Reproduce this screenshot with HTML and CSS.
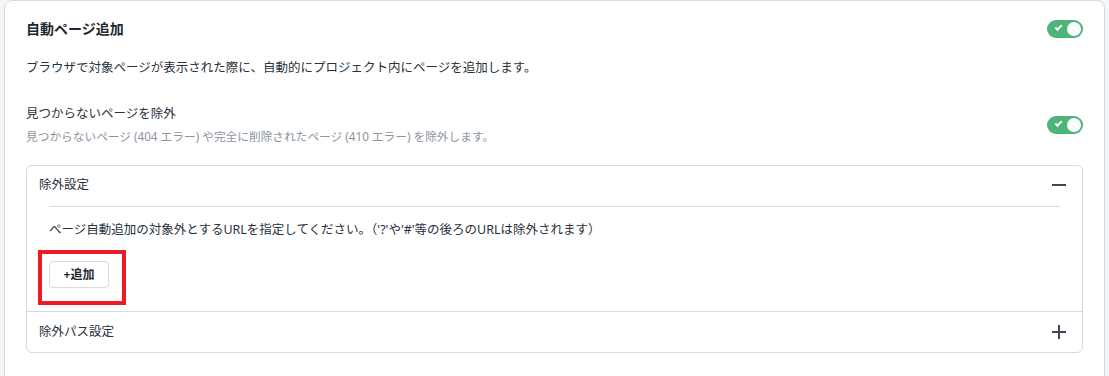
FILE: index.html
```html
<!DOCTYPE html>
<html lang="ja">

<head>
    <meta charset="UTF-8">
    <meta name="viewport" content="width=device-width, initial-scale=1.0">
    <title>自動ページ追加</title>
    <link rel="stylesheet" href="styles.css">
</head>

<body>
    <div class="settings-card">
        <div class="setting-row">
            <h2 class="setting-title">自動ページ追加</h2>
            <span class="toggle"><span class="toggle-check"></span><span class="toggle-knob"></span></span>
        </div>
        <p class="setting-desc">ブラウザで対象ページが表示された際に、自動的にプロジェクト内にページを追加します。</p>

        <div class="setting-row option-row">
            <div>
                <div class="option-label">見つからないページを除外</div>
                <div class="option-sub">見つからないページ (404 エラー) や完全に削除されたページ (410 エラー) を除外します。</div>
            </div>
            <span class="toggle"><span class="toggle-check"></span><span class="toggle-knob"></span></span>
        </div>

        <div class="accordion">
            <div class="accordion-item">
                <div class="accordion-header">
                    <span>除外設定</span>
                    <span class="acc-icon minus"></span>
                </div>
                <div class="accordion-body">
                    <p class="acc-text">ページ自動追加の対象外とするURLを指定してください。（'?'や'#'等の後ろのURLは除外されます）</p>
                    <div class="add-wrap">
                        <div class="add-button">+追加</div>
                        <div class="highlight"></div>
                    </div>
                </div>
            </div>
            <div class="accordion-item">
                <div class="accordion-header">
                    <span>除外パス設定</span>
                    <span class="acc-icon plus"></span>
                </div>
            </div>
        </div>
    </div>
</body>

</html>
```

FILE: styles.css
```css
:root {
    --text: #27313b;
    --muted: #8b949e;
    --border: #d4dae2;
    --green: #4bb57b;
    --red: #ec1c24;
}

* {
    margin: 0;
    padding: 0;
    box-sizing: border-box;
    font-family: 'Noto Sans', 'Noto Sans CJK JP', sans-serif;
}

body {
    background: #f3f5f8;
    color: var(--text);
    height: 376px;
    overflow: hidden;
    padding-left: 4px;
}

.settings-card {
    width: 1101px;
    min-height: 400px;
    background: #fff;
    border: 1px solid var(--border);
    border-radius: 8px;
    padding: 18px 21px 20px 21px;
}

.setting-row {
    display: flex;
    align-items: center;
    justify-content: space-between;
}

.setting-title {
    font-size: 14px;
    line-height: 20px;
    font-weight: 700;
    color: #1f2830;
}

.setting-desc {
    margin-top: 19px;
    font-size: 12.5px;
    line-height: 20px;
}

.option-row {
    margin-top: 26px;
}

.option-label {
    font-size: 12.5px;
    line-height: 20px;
}

.option-sub {
    margin-top: 3px;
    font-size: 11.7px;
    line-height: 18px;
    color: var(--muted);
}

/* toggle switch */
.toggle {
    position: relative;
    display: inline-block;
    width: 36px;
    height: 18px;
    border-radius: 9px;
    background: var(--green);
    flex-shrink: 0;
}

.toggle-knob {
    position: absolute;
    right: 2px;
    top: 2px;
    width: 14px;
    height: 14px;
    border-radius: 50%;
    background: #fff;
}

.toggle-check {
    position: absolute;
    left: 8px;
    top: 5px;
    width: 7px;
    height: 4px;
    border-left: 2px solid #fff;
    border-bottom: 2px solid #fff;
    transform: rotate(-45deg);
}

/* accordion */
.accordion {
    margin-top: 20px;
    border: 1px solid var(--border);
    border-radius: 6px;
}

.accordion-item + .accordion-item {
    border-top: 1px solid var(--border);
}

.accordion-header {
    display: flex;
    align-items: center;
    justify-content: space-between;
    padding: 9px 16px 11px 12px;
    font-size: 12.5px;
    line-height: 20px;
}

.accordion-item + .accordion-item .accordion-header {
    padding-top: 10px;
    padding-bottom: 10px;
}

.acc-icon {
    position: relative;
    width: 14px;
    height: 14px;
}

.acc-icon::before,
.acc-icon::after {
    content: '';
    position: absolute;
    background: #3d4855;
}

.acc-icon::before {
    left: 0;
    right: 0;
    top: 6px;
    height: 2px;
}

.plus::after {
    top: 0;
    bottom: 0;
    left: 6px;
    width: 2px;
}

.accordion-body {
    margin: 0 22px;
    border-top: 1px solid var(--border);
    padding: 13px 0 23px;
}

.acc-text {
    font-size: 12.5px;
    line-height: 20px;
}

.add-wrap {
    position: relative;
    margin-top: 21px;
    width: 60px;
}

.add-button {
    height: 27px;
    border: 1px solid var(--border);
    border-radius: 4px;
    font-size: 12px;
    font-weight: 700;
    line-height: 25px;
    text-align: center;
    color: #1f2830;
}

/* annotation box */
.highlight {
    position: absolute;
    left: -11px;
    top: -11px;
    width: 88px;
    height: 55px;
    border: 4px solid var(--red);
}
```
